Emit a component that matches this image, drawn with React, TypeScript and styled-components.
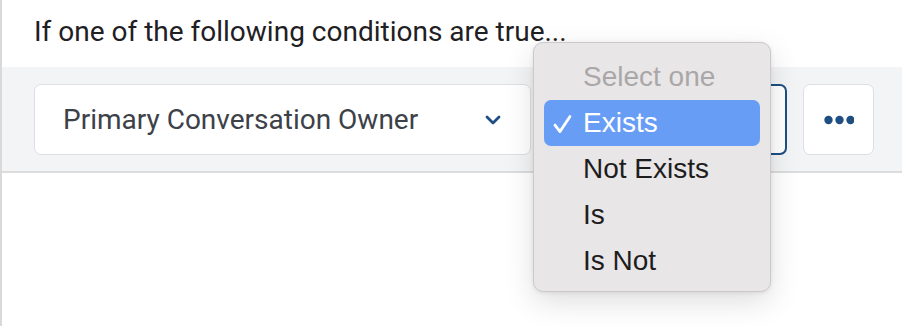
import styled, { createGlobalStyle } from 'styled-components';

const GlobalStyle = createGlobalStyle`
  html, body {
    margin: 0;
    padding: 0;
    background: #ffffff;
  }
  #root {
    width: 902px;
    height: 326px;
    overflow: hidden;
  }
`;

const Panel = styled.div`
  position: relative;
  width: 902px;
  height: 326px;
  box-sizing: border-box;
  border-left: 2px solid #d9d9d9;
  background: #ffffff;
  font-family: Roboto, 'Liberation Sans', sans-serif;
`;

const Heading = styled.div`
  height: 67px;
  box-sizing: border-box;
  padding: 15px 0 0 32px;
  font-size: 28px;
  line-height: 1.2;
  color: #1f2023;
`;

const ConditionRow = styled.div`
  display: flex;
  align-items: center;
  gap: 16px;
  height: 106px;
  box-sizing: border-box;
  padding: 1px 0 0 32px;
  background: #f3f4f6;
  border-bottom: 2px solid #dcdcdc;
`;

const SelectBox = styled.div<{ $width: number; $focused?: boolean }>`
  flex-shrink: 0;
  display: flex;
  align-items: center;
  justify-content: space-between;
  width: ${(p) => p.$width}px;
  height: 71px;
  box-sizing: border-box;
  padding: 0 29px 0 28px;
  background: #ffffff;
  border: ${(p) => (p.$focused ? '2px solid #1f4e82' : '1px solid #dcdfe3')};
  border-radius: 7px;
  font-size: 28px;
  color: #3d4148;
`;

const IconButton = styled.div`
  flex-shrink: 0;
  display: flex;
  align-items: center;
  justify-content: center;
  width: 71px;
  height: 71px;
  box-sizing: border-box;
  background: #ffffff;
  border: 1px solid #dcdfe3;
  border-radius: 7px;
`;

const Menu = styled.div`
  position: absolute;
  left: 531px;
  top: 42px;
  width: 238px;
  height: 250px;
  box-sizing: border-box;
  padding: 11px 10px 9px;
  background: #e9e6e7;
  border: 1px solid #cbc9ca;
  border-radius: 10px;
  box-shadow: 0 10px 30px rgba(0, 0, 0, 0.13), 0 1px 4px rgba(0, 0, 0, 0.08);
  font-family: 'Liberation Sans', Arial, sans-serif;
`;

const MenuItem = styled.div<{ $selected?: boolean; $placeholder?: boolean }>`
  position: relative;
  display: flex;
  align-items: center;
  height: 46px;
  padding-left: 39px;
  border-radius: 7px;
  font-size: 28px;
  background: ${(p) => (p.$selected ? '#689df6' : 'transparent')};
  color: ${(p) => (p.$selected ? '#ffffff' : p.$placeholder ? '#a9a7a8' : '#1e1d1e')};
`;

const Check = styled.svg`
  position: absolute;
  left: 8px;
  top: 50%;
  transform: translateY(-45%);
`;

const options = ['Exists', 'Not Exists', 'Is', 'Is Not'];

export default function App() {
  return (
    <>
      <GlobalStyle />
      <Panel>
        <Heading>If one of the following conditions are true...</Heading>
        <ConditionRow>
          <SelectBox $width={497}>
            <span>Primary Conversation Owner</span>
            <svg width="16" height="10" viewBox="0 0 16 10">
              <path
                d="M2 2 L8 8 L14 2"
                fill="none"
                stroke="#1f4e82"
                strokeWidth="2.8"
                strokeLinecap="round"
                strokeLinejoin="round"
              />
            </svg>
          </SelectBox>
          {/* focused operator select, its value is covered by the open list */}
          <SelectBox $width={240} $focused />
          <IconButton>
            <svg width="30" height="10" viewBox="0 0 30 10">
              <circle cx="4.5" cy="5" r="4.2" fill="#1f4e82" />
              <circle cx="15.5" cy="5" r="4.2" fill="#1f4e82" />
              <circle cx="26.5" cy="5" r="4.2" fill="#1f4e82" />
            </svg>
          </IconButton>
        </ConditionRow>

        <Menu>
          <MenuItem $placeholder>Select one</MenuItem>
          {options.map((o, i) => (
            <MenuItem key={o} $selected={i === 0}>
              {i === 0 && (
                <Check width="21" height="21" viewBox="0 0 21 21">
                  <path
                    d="M3 11.5 L8 18 L18 3"
                    fill="none"
                    stroke="#ffffff"
                    strokeWidth="2.8"
                    strokeLinecap="round"
                    strokeLinejoin="round"
                  />
                </Check>
              )}
              {o}
            </MenuItem>
          ))}
        </Menu>
      </Panel>
    </>
  );
}
